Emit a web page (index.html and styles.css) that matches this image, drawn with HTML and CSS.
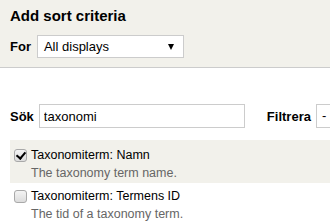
FILE: index.html
```html
<!DOCTYPE html>
<html lang="sv">
<head>
  <meta charset="UTF-8" />
  <title>Add sort criteria</title>
  <link rel="stylesheet" href="styles.css">
</head>
<body>
  <div class="dialog-head">
    <h1>Add sort criteria</h1>
    <div class="for-row">
      <label>For</label>
      <div class="select wide">All displays<span class="arrow"></span></div>
    </div>
  </div>

  <div class="filters">
    <label>Sök</label>
    <input type="text" class="search" value="taxonomi" />
    <label class="filter-label">Filtrera</label>
    <div class="select small">- </div>
  </div>

  <div class="options">
    <div class="option checked">
      <div class="option-title"><input type="checkbox" checked /> Taxonomiterm: Namn</div>
      <div class="option-desc">The taxonomy term name.</div>
    </div>
    <div class="option">
      <div class="option-title"><input type="checkbox" /> Taxonomiterm: Termens ID</div>
      <div class="option-desc">The tid of a taxonomy term.</div>
    </div>
  </div>
</body>
</html>
```

FILE: styles.css
```css
* { box-sizing: border-box; }
body {
  margin: 0;
  font-family: "Liberation Sans", Arial, sans-serif;
  font-size: 12px;
  color: #000;
  background: #fff;
  overflow: hidden;
}
.dialog-head {
  background: #f2f1eb;
  border-bottom: 1px solid #ccc;
  padding: 7px 10px 9px;
  height: 68px;
}
h1 {
  margin: 0 0 10px;
  font-size: 15px;
  font-weight: bold;
  line-height: 18px;
}
.for-row, .filters {
  display: flex;
  align-items: center;
}
.for-row > *, .filters > * {
  flex-shrink: 0;
}
label {
  font-weight: bold;
  font-size: 13px;
}
.select {
  background: #fff;
  border: 1px solid #ccc;
  height: 23px;
  line-height: 21px;
  padding: 0 6px;
  font-size: 13px;
  position: relative;
}
.select.wide {
  width: 147px;
  margin-left: 6px;
}
.arrow {
  position: absolute;
  right: 9px;
  top: 8px;
  border-left: 3.5px solid transparent;
  border-right: 3.5px solid transparent;
  border-top: 6px solid #000;
}
.filters {
  padding: 36px 10px 0;
}
.search {
  margin: 0 0 0 5px;
  width: 206px;
  height: 24px;
  border: 1px solid #ccc;
  padding: 0 4px;
  font-family: inherit;
  font-size: 13px;
}
.filter-label {
  margin-left: 22px;
}
.select.small {
  margin-left: 5px;
  width: 40px;
  height: 24px;
  padding: 0 5px;
}
.options {
  padding: 12px 0 0 10px;
}
.option {
  padding: 7px 4px 2px;
}
.option + .option {
  padding-top: 5px;
}
.option.checked {
  background: #f2f1eb;
}
.option-title {
  display: flex;
  align-items: center;
  font-size: 12.5px;
  line-height: 16px;
}
.option-title input {
  appearance: none;
  -webkit-appearance: none;
  margin: 0 4px 0 0;
  width: 13px;
  height: 13px;
  border: 1px solid #a9a9a9;
  border-radius: 3px;
  background: linear-gradient(#f4f4f4, #dcdcdc);
  position: relative;
}
.option-title input:checked::after {
  content: "";
  position: absolute;
  left: 3px;
  top: 0px;
  width: 4px;
  height: 7px;
  border: solid #000;
  border-width: 0 2px 2px 0;
  transform: rotate(40deg);
}
.option-desc {
  color: #666;
  font-size: 12.5px;
  line-height: 16px;
  padding: 2px 0 0 17px;
}
```
